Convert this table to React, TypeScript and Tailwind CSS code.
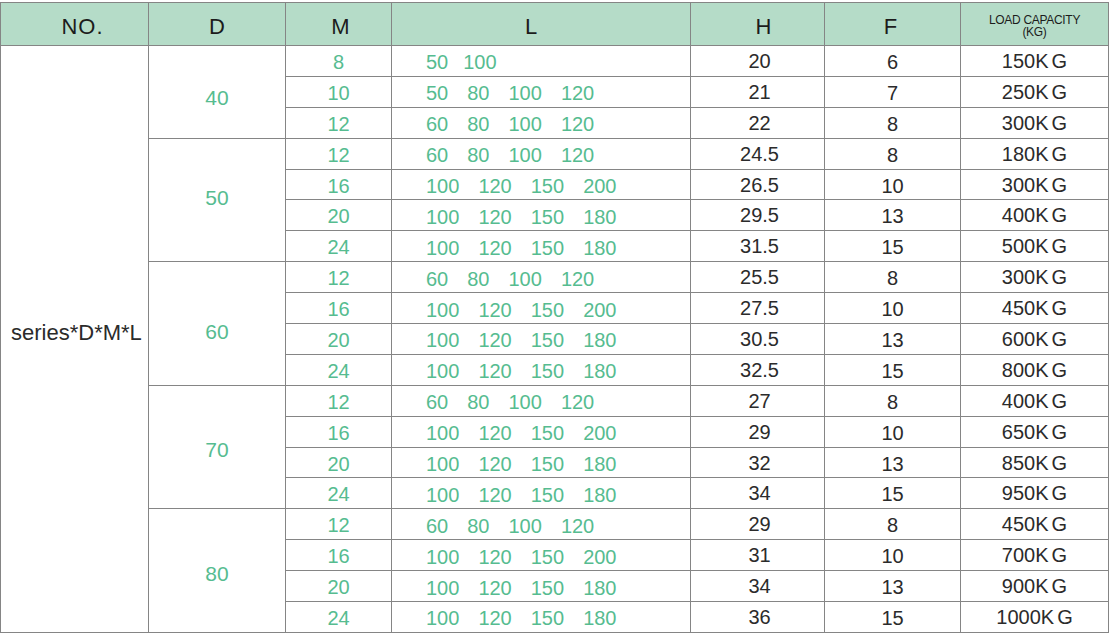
const groups = [
  {
    d: "40",
    pad: "pt-[12px]",
    rows: [
      { m: "8", l: ["50", "100"], h: "20", f: "6", kg: "150" },
      { m: "10", l: ["50", "80", "100", "120"], h: "21", f: "7", kg: "250" },
      { m: "12", l: ["60", "80", "100", "120"], h: "22", f: "8", kg: "300" },
    ],
  },
  {
    d: "50",
    pad: "pb-[4px]",
    rows: [
      { m: "12", l: ["60", "80", "100", "120"], h: "24.5", f: "8", kg: "180" },
      { m: "16", l: ["100", "120", "150", "200"], h: "26.5", f: "10", kg: "300" },
      { m: "20", l: ["100", "120", "150", "180"], h: "29.5", f: "13", kg: "400" },
      { m: "24", l: ["100", "120", "150", "180"], h: "31.5", f: "15", kg: "500" },
    ],
  },
  {
    d: "60",
    pad: "pt-[16px]",
    rows: [
      { m: "12", l: ["60", "80", "100", "120"], h: "25.5", f: "8", kg: "300" },
      { m: "16", l: ["100", "120", "150", "200"], h: "27.5", f: "10", kg: "450" },
      { m: "20", l: ["100", "120", "150", "180"], h: "30.5", f: "13", kg: "600" },
      { m: "24", l: ["100", "120", "150", "180"], h: "32.5", f: "15", kg: "800" },
    ],
  },
  {
    d: "70",
    pad: "pt-[4px]",
    rows: [
      { m: "12", l: ["60", "80", "100", "120"], h: "27", f: "8", kg: "400" },
      { m: "16", l: ["100", "120", "150", "200"], h: "29", f: "10", kg: "650" },
      { m: "20", l: ["100", "120", "150", "180"], h: "32", f: "13", kg: "850" },
      { m: "24", l: ["100", "120", "150", "180"], h: "34", f: "15", kg: "950" },
    ],
  },
  {
    d: "80",
    pad: "pt-[6px]",
    rows: [
      { m: "12", l: ["60", "80", "100", "120"], h: "29", f: "8", kg: "450" },
      { m: "16", l: ["100", "120", "150", "200"], h: "31", f: "10", kg: "700" },
      { m: "20", l: ["100", "120", "150", "180"], h: "34", f: "13", kg: "900" },
      { m: "24", l: ["100", "120", "150", "180"], h: "36", f: "15", kg: "1000" },
    ],
  },
];

const total = groups.reduce((n, g) => n + g.rows.length, 0);

const cell = "border border-[#858585] p-0";
const green = "text-[#56bc90]";
const dark = "text-[#2b2b2b]";

export default function App() {
  return (
    <div className="bg-white w-[1109px] h-[634px] pt-[2px] font-['Liberation_Sans',Arial,sans-serif]">
      <table className="border-collapse table-fixed w-[1108px] text-[20px] leading-none">
        <colgroup>
          <col className="w-[148px]" />
          <col className="w-[137px]" />
          <col className="w-[106px]" />
          <col className="w-[299px]" />
          <col className="w-[134px]" />
          <col className="w-[136px]" />
          <col className="w-[148px]" />
        </colgroup>
        <thead>
          <tr className="h-[43px] bg-[#b5dcc8] text-[22px] text-[#1c1c1c]">
            <th className={`${cell} font-normal pl-[16px] pt-[6px] tracking-[1px]`}>NO.</th>
            <th className={`${cell} font-normal pt-[6px]`}>D</th>
            <th className={`${cell} font-normal pl-[4px] pt-[6px]`}>M</th>
            <th className={`${cell} font-normal pr-[20px] pt-[6px]`}>L</th>
            <th className={`${cell} font-normal pl-[12px] pt-[6px]`}>H</th>
            <th className={`${cell} font-normal pr-[4px] pt-[6px]`}>F</th>
            <th className={`${cell} font-normal text-[12px] leading-[12.5px] tracking-[-0.3px] pt-[4px]`}>
              LOAD CAPACITY
              <br />
              (KG)
            </th>
          </tr>
        </thead>
        <tbody>
          {groups.map((g, gi) =>
            g.rows.map((r, ri) => (
              <tr key={`${gi}-${ri}`} className="h-[30.9px]">
                {gi === 0 && ri === 0 && (
                  <td rowSpan={total} className={`${cell} ${dark} text-[22px] text-left pl-[10px] pb-[12px]`}>
                    series*D*M*L
                  </td>
                )}
                {ri === 0 && (
                  <td rowSpan={g.rows.length} className={`${cell} ${green} text-center text-[21px] ${g.pad}`}>
                    {g.d}
                  </td>
                )}
                <td className={`${cell} ${green} text-center pt-[2px]`}>{r.m}</td>
                <td className={`${cell} ${green} pl-[34px] pt-[3px]`}>
                  <div className={`flex ${r.l.length === 2 ? "gap-[15px]" : "gap-[19px]"}`}>
                    {r.l.map((v, i) => (
                      <span key={i}>{v}</span>
                    ))}
                  </div>
                </td>
                <td className={`${cell} ${dark} text-center pl-[4px]`}>{r.h}</td>
                <td className={`${cell} ${dark} text-center pt-[2px]`}>{r.f}</td>
                <td className={`${cell} ${dark} text-center`}>
                  {r.kg}
                  <span className="tracking-[3px]">K</span>G
                </td>
              </tr>
            ))
          )}
        </tbody>
      </table>
    </div>
  );
}
